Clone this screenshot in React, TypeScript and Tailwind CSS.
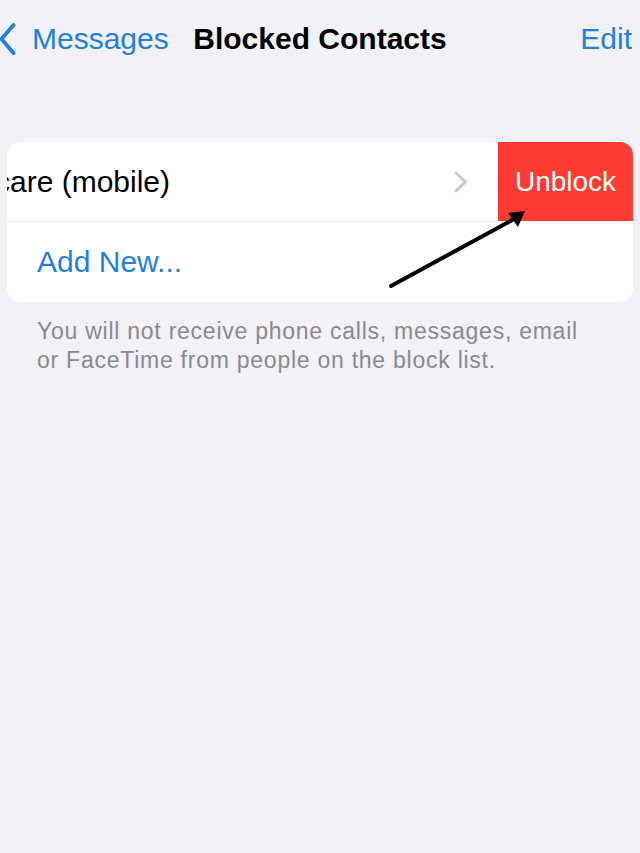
import React from "react";

export default function App() {
  return (
    <div
      className="relative w-[640px] h-[853px] bg-[#f1f1f6] overflow-hidden"
      style={{ fontFamily: '"Liberation Sans", Arial, sans-serif' }}
    >
      {/* nav bar */}
      <div className="grid grid-cols-[1fr_auto_1fr] items-center h-[78px]">
        <div className="flex items-center text-[#1f7fe3] text-[30px] leading-none">
          <svg width="16" height="32" viewBox="0 0 16 32" className="mr-[16px]">
            <polyline
              points="13.5,2 1.5,16 13.5,30"
              fill="none"
              stroke="#1f7fe3"
              strokeWidth="3.8"
              strokeLinecap="round"
              strokeLinejoin="round"
            />
          </svg>
          <span>Messages</span>
        </div>
        <div className="text-[30px] leading-none font-bold text-black">
          Blocked Contacts
        </div>
        <div className="flex justify-end pr-[8px] text-[#1f7fe3] text-[30px] leading-none">
          Edit
        </div>
      </div>

      {/* card */}
      <div className="mt-[64px] ml-[7px] w-[626px] bg-white rounded-[13px] overflow-hidden">
        <div className="flex h-[80px]">
          <div className="flex-1 flex items-center border-b border-[#e2e2e6] overflow-hidden">
            <span className="ml-[-12px] text-[30px] leading-none text-black whitespace-nowrap">
              care (mobile)
            </span>
            <div className="flex-1" />
            <svg width="14" height="22" viewBox="0 0 14 22" className="mr-[30px]">
              <polyline
                points="2,2 11.5,11 2,20"
                fill="none"
                stroke="#c5c5ca"
                strokeWidth="2.6"
                strokeLinecap="round"
                strokeLinejoin="round"
              />
            </svg>
          </div>
          <div className="w-[135px] h-[79px] bg-[#fe3b30] flex items-center justify-center text-white text-[28px] leading-none">
            Unblock
          </div>
        </div>
        <div className="h-[80px] flex items-center pl-[30px] text-[#1f7fe3] text-[30px] leading-none">
          Add New...
        </div>
      </div>

      <p className="mt-[15px] pl-[37px] pr-[20px] text-[23px] leading-[29px] tracking-[0.75px] text-[#8a8a8f]">
        You will not receive phone calls, messages, email
        <br />
        or FaceTime from people on the block list.
      </p>

      {/* annotation arrow */}
      <svg
        className="absolute left-0 top-0 pointer-events-none"
        width="640"
        height="853"
        viewBox="0 0 640 853"
      >
        <line
          x1="391"
          y1="286"
          x2="514"
          y2="219"
          stroke="#000"
          strokeWidth="4"
          strokeLinecap="round"
        />
        <polygon points="525,211 508,213 518,227" fill="#000" />
      </svg>
    </div>
  );
}
